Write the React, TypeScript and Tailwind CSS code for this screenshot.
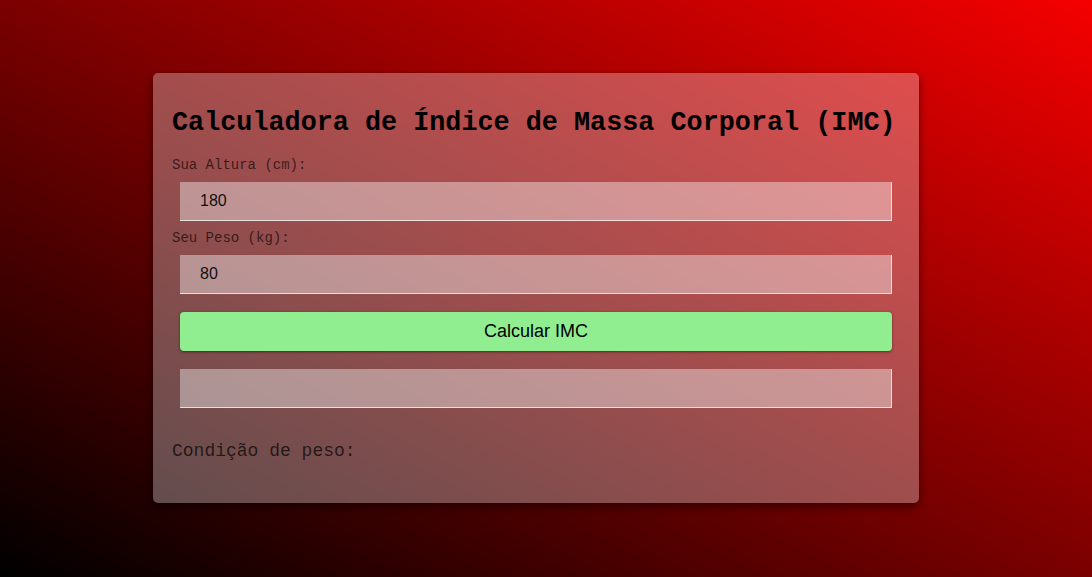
import { useState } from "react";

export default function App() {
  const [altura, setAltura] = useState("180");
  const [peso, setPeso] = useState("80");
  const [imc, setImc] = useState("");
  const [condicao, setCondicao] = useState("");

  function calcular() {
    const h = Number(altura) / 100;
    const p = Number(peso);
    if (!h || !p) return;
    const v = p / (h * h);
    setImc(v.toFixed(2));
    if (v < 18.5) setCondicao("Abaixo do peso");
    else if (v < 25) setCondicao("Peso normal");
    else if (v < 30) setCondicao("Sobrepeso");
    else setCondicao("Obesidade");
  }

  const mono = "font-['Liberation_Mono','Courier_New',monospace]";
  const sans = "font-['Liberation_Sans',Arial,sans-serif]";
  const field =
    "block ml-[7px] w-[712px] h-[39px] px-5 bg-white/40 border-r border-b border-white/70 outline-none text-base text-[#111] " +
    sans;

  return (
    <div className="min-h-screen pt-[73px] bg-[linear-gradient(to_top_right,#000000,#f50000)]">
      <div className="ml-[153px] w-[766px] rounded-[5px] bg-white/30 shadow-[0_4px_10px_rgba(0,0,0,0.45)] px-5 pt-[35px] pb-[42px]">
        <h1 className={`${mono} font-bold text-[26.8px] leading-[30px] text-black whitespace-nowrap -ml-px`}>
          Calculadora de Índice de Massa Corporal (IMC)
        </h1>

        <label className={`${mono} block mt-[19px] text-[14px] leading-4 text-black/65 -ml-px`}>Sua Altura (cm):</label>
        <input className={`${field} mt-[9px]`} value={altura} onChange={e => setAltura(e.target.value)} />

        <label className={`${mono} block mt-[9px] text-[14px] leading-4 text-black/65 -ml-px`}>Seu Peso (kg):</label>
        <input className={`${field} mt-[9px]`} value={peso} onChange={e => setPeso(e.target.value)} />

        <button
          onClick={calcular}
          className={`${sans} block ml-[7px] mt-[18px] w-[712px] h-[39px] rounded-[4px] bg-[#90ee90] text-[18px] text-black shadow-[0_1px_3px_rgba(0,0,0,0.45)]`}
        >
          Calcular IMC
        </button>

        <input className={`${field} mt-[18px]`} value={imc} readOnly />

        <p className={`${mono} mt-[33px] text-[18px] leading-5 text-black/70 -ml-px`}>Condição de peso:{condicao ? ` ${condicao}` : ""}</p>
      </div>
    </div>
  );
}
